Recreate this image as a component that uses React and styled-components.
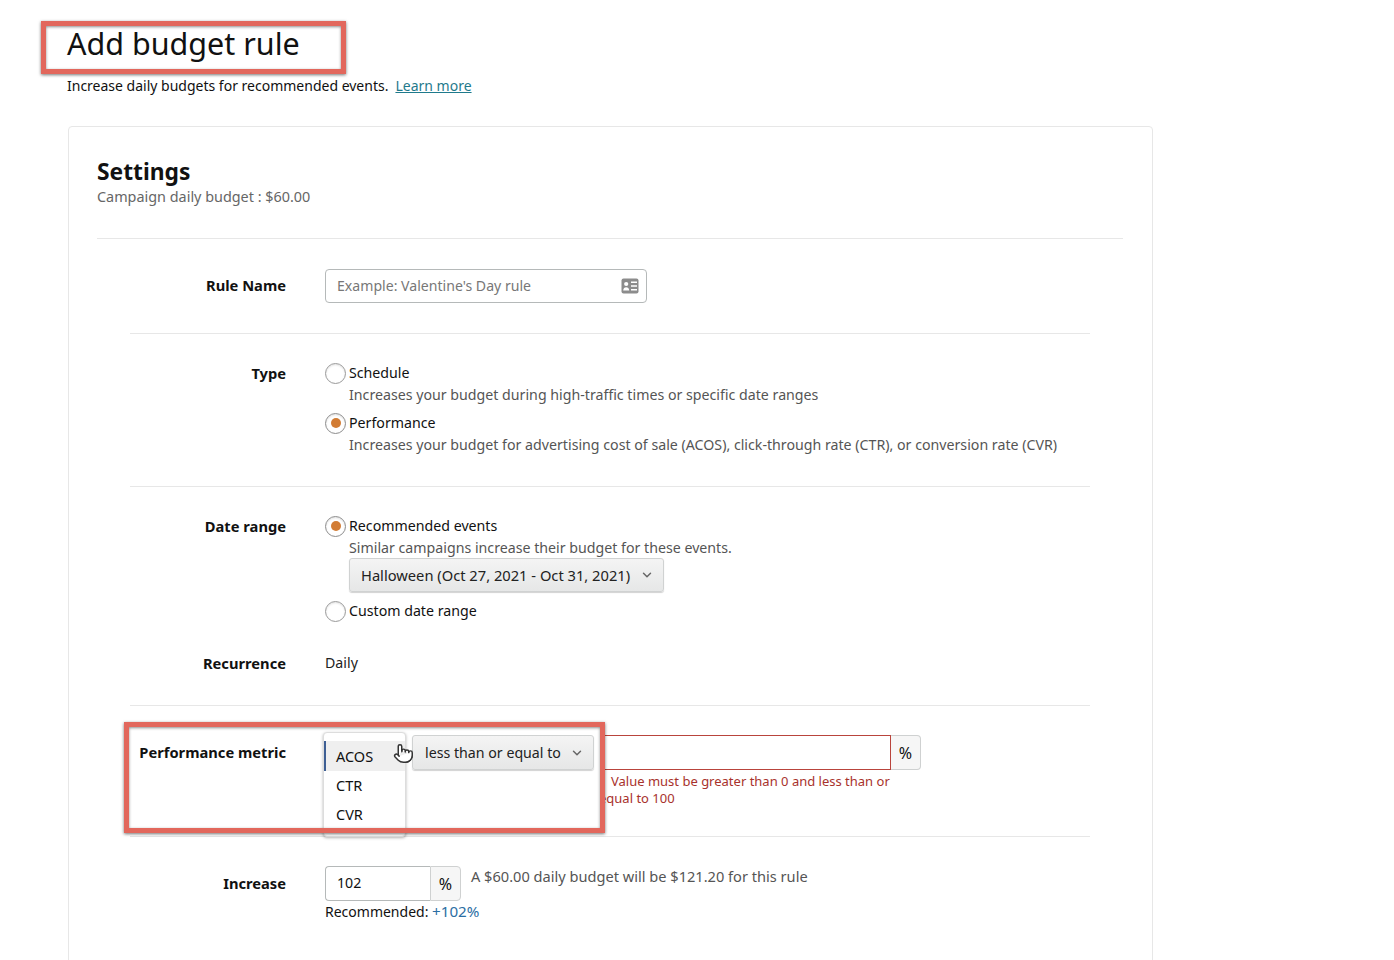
import React from "react";
import styled, { createGlobalStyle } from "styled-components";
import { ChevronDown, Pointer } from "lucide-react";

const GlobalStyle = createGlobalStyle`
body {
  margin: 0;
  background: #fff;
  color: #111;
  font-family: "Noto Sans", "Liberation Sans", sans-serif;
  font-size: 14.2px;
  height: 960px;
  overflow: hidden;
}
`

const Page = styled.div`
  position: relative;
  width: 1394px;
  height: 960px;
  overflow: hidden;
`

const Header = styled.header`
  padding: 23px 0 0 67px;
`

const Title = styled.h1`
  margin: 0;
  font-size: 30.5px;
  font-weight: 400;
  line-height: 40px;
  color: #111;
`

const Intro = styled.p`
  margin: 13px 0 0;
  font-size: 14px;
  line-height: 20px;
`

const LearnMore = styled.a`
  margin-left: 7px;
  color: #1f7a8c;
  text-decoration: underline;
`

const TitleFrame = styled.div`
  position: absolute;
  left: 41px;
  top: 21px;
  width: 305px;
  height: 53px;
  box-sizing: border-box;
  border: 5px solid #e2675c;
  box-shadow: 0 1px 3px rgba(0, 0, 0, 0.55), inset 0 1px 3px rgba(0, 0, 0, 0.45);
`

const Card = styled.section`
  margin: 30px 0 0 68px;
  width: 1085px;
  box-sizing: border-box;
  height: 900px;
  padding: 30px 29px 0 28px;
  border: 1px solid #e7e7e7;
  border-radius: 4px;
`

const CardHead = styled.div`
  padding-bottom: 31px;
  border-bottom: 1px solid #e7e7e7;
`

const CardTitle = styled.h2`
  margin: 0;
  font-size: 22.8px;
  font-weight: 700;
  line-height: 30px;
`

const Subtle = styled.div`
  font-size: 14.4px;
  line-height: 20px;
  color: #666;
`

const Row = styled.div`
  position: relative;
  display: grid;
  grid-template-columns: 156px 1fr;
  column-gap: 39px;
  margin: 0 33px;
  padding: ${(p) => p.$pad || "28px 0 31px"};
  border-bottom: ${(p) => (p.$plain ? "none" : "1px solid #e7e7e7")};
`

const Label = styled.div`
  position: relative;
  z-index: 2;
  text-align: right;
  font-weight: 700;
  font-size: 14.7px;
  line-height: ${(p) => p.$line || "22px"};
`

const Field = styled.div`
  position: relative;
  display: flex;
  align-items: center;
  width: 322px;
  height: 34px;
  box-sizing: border-box;
  border: 1px solid #b5b9b9;
  border-radius: 4px;
  padding: 0 7px 0 11px;
`

const TextInput = styled.input`
  flex: 1;
  min-width: 0;
  border: none;
  outline: none;
  padding: 0 0 2px;
  font: inherit;
  font-size: 14.1px;
  color: #111;
  background: transparent;
  &::placeholder {
    color: #777;
    opacity: 1;
  }
`

const Option = styled.div`
  display: flex;
  align-items: center;
  gap: 3px;
  line-height: 22px;
  margin-top: ${(p) => p.$top || 0}px;
`

const Radio = styled.span`
  display: flex;
  align-items: center;
  justify-content: center;
  width: 21px;
  height: 21px;
  box-sizing: border-box;
  border-radius: 50%;
  border: 1px solid ${(p) => (p.$on ? "#8d8d8d" : "#9a9a9a")};
  box-shadow: inset 0 1px 2px rgba(0, 0, 0, 0.12);
  &::after {
    content: "";
    display: ${(p) => (p.$on ? "block" : "none")};
    width: 10px;
    height: 10px;
    border-radius: 50%;
    background: #d27c34;
  }
`

const Hint = styled.div`
  margin: 1px 0 0 24px;
  line-height: 20px;
  color: #555;
`

const Select = styled.div`
  position: relative;
  z-index: 2;
  display: inline-flex;
  align-items: center;
  justify-content: space-between;
  box-sizing: border-box;
  height: ${(p) => p.$height || 34}px;
  width: ${(p) => p.$width}px;
  margin-left: ${(p) => p.$left || 0}px;
  padding: 0 9px 0 ${(p) => p.$inset || 12}px;
  border: 1px solid #d0d2d2;
  border-radius: 3px;
  background: linear-gradient(#f4f4f4, #e6e7e7);
  box-shadow: 0 1px 1px rgba(0, 0, 0, 0.18);
  color: #222;
  font-size: ${(p) => p.$size || 14.2}px;
`

const Plain = styled.div`
  line-height: 20px;
  color: #222;
`

const MetricControls = styled.div`
  display: flex;
  align-items: flex-start;
`

const MenuSlot = styled.div`
  position: relative;
  z-index: 2;
  width: 87px;
  flex: none;
`

const Menu = styled.ul`
  position: absolute;
  left: -2px;
  top: -3px;
  width: 83px;
  height: 105px;
  box-sizing: border-box;
  margin: 0;
  padding: 8px 0 0;
  list-style: none;
  background: #fff;
  border: 1px solid #ddd;
  border-radius: 4px;
  box-shadow: 0 1px 3px rgba(0, 0, 0, 0.3);
  font-size: 14.5px;
`

const MenuItem = styled.li`
  height: ${(p) => (p.$active ? "30px" : "29px")};
  line-height: ${(p) => (p.$active ? "30px" : "29px")};
  padding-left: ${(p) => (p.$active ? "10px" : "12px")};
  background: ${(p) => (p.$active ? "#efefef" : "transparent")};
  border-left: ${(p) => (p.$active ? "2px solid #3e5f94" : "none")};
`

const ValueColumn = styled.div`
  width: 327px;
  flex: none;
`

const InputGroup = styled.div`
  display: flex;
  height: ${(p) => p.$height}px;
  width: ${(p) => p.$width}px;
  box-sizing: border-box;
`

const ValueBox = styled.div`
  flex: 1;
  display: flex;
  align-items: center;
  padding: 0 11px 2px;
  box-sizing: border-box;
  border: ${(p) => (p.$error ? "1.5px solid #b9443c" : "1px solid #b5b9b9")};
  border-right-width: ${(p) => (p.$error ? "1.5px" : "0")};
  border-radius: ${(p) => (p.$error ? "0" : "4px 0 0 4px")};
`

const Addon = styled.div`
  width: ${(p) => p.$width}px;
  flex: none;
  display: flex;
  align-items: center;
  justify-content: center;
  box-sizing: border-box;
  border: 1px solid #cfd1d1;
  border-left: ${(p) => (p.$joined ? "1px solid #cfd1d1" : "none")};
  border-radius: 0 4px 4px 0;
  background: #f6f6f6;
  font-size: 16px;
`

const ErrorText = styled.div`
  width: 300px;
  box-sizing: border-box;
  padding-left: 5px;
  margin-top: 3px;
  font-size: 13px;
  line-height: 17px;
  text-indent: 12px;
  color: #a8322c;
`

const Mask = styled.div`
  position: absolute;
  left: -6px;
  top: 16px;
  width: 481px;
  height: 111px;
  background: #fff;
  z-index: 1;
`

const Frame = styled.div`
  position: absolute;
  left: -6px;
  top: 16px;
  width: 481px;
  height: 111px;
  box-sizing: border-box;
  border: 5px solid #e2675c;
  box-shadow: 0 1px 3px rgba(0, 0, 0, 0.55), inset 0 1px 3px rgba(0, 0, 0, 0.45);
  z-index: 3;
  pointer-events: none;
`

const Cursor = styled.span`
  position: absolute;
  left: 263px;
  top: 37px;
  z-index: 4;
  display: flex;
  color: #333;
`

const IncreaseLine = styled.div`
  display: flex;
  align-items: flex-start;
  gap: 10px;
`

const Budget = styled.div`
  font-size: 14.6px;
  line-height: 20px;
  color: #555;
`

const Recommended = styled.div`
  font-size: 14px;
  line-height: 20px;
`

const Plus = styled.span`
  color: #2b6ea3;
  font-size: 15.2px;
`

function CardIcon() {
  return (
    <svg width="18" height="16" viewBox="0 0 18 16">
      <rect x="0.5" y="0.5" width="17" height="15" rx="2" fill="#8c8c8c" />
      <circle cx="5.2" cy="6" r="2.1" fill="#fff" />
      <path d="M2.2 12.6c0-2.2 1.4-3.4 3-3.4s3 1.2 3 3.4z" fill="#fff" />
      <path d="M10 4.2h6M10 8h6M10 11.8h6" stroke="#fff" strokeWidth="1.6" />
    </svg>
  )
}

function App() {
  return (
    <Page>
      <GlobalStyle />
      <Header>
        <Title>Add budget rule</Title>
        <Intro>
          Increase daily budgets for recommended events.
          <LearnMore href="#">Learn more</LearnMore>
        </Intro>
      </Header>
      <TitleFrame />

      <Card>
        <CardHead>
          <CardTitle>Settings</CardTitle>
          <Subtle>Campaign daily budget : $60.00</Subtle>
        </CardHead>

        <Row $pad="30px 0 30px">
          <Label $line="33px">Rule Name</Label>
          <Field>
            <TextInput placeholder="Example: Valentine's Day rule" />
            <CardIcon />
          </Field>
        </Row>

        <Row>
          <Label>Type</Label>
          <div>
            <Option><Radio />Schedule</Option>
            <Hint>Increases your budget during high-traffic times or specific date ranges</Hint>
            <Option $top={7}><Radio $on />Performance</Option>
            <Hint>Increases your budget for advertising cost of sale (ACOS), click-through rate (CTR), or conversion rate (CVR)</Hint>
          </div>
        </Row>

        <Row $pad="28px 0 0" $plain>
          <Label>Date range</Label>
          <div>
            <Option><Radio $on />Recommended events</Option>
            <Hint>Similar campaigns increase their budget for these events.</Hint>
            <Select $width={315} $left={24} $size={14.7} $inset={11}>
              Halloween (Oct 27, 2021 - Oct 31, 2021)
              <ChevronDown size={14} strokeWidth={2.5} color="#666" />
            </Select>
            <Option $top={8}><Radio />Custom date range</Option>
          </div>
        </Row>

        <Row $pad="31px 0 31px">
          <Label $line="21px">Recurrence</Label>
          <Plain>Daily</Plain>
        </Row>

        <Row $pad="29px 0 29px">
          <Mask />
          <Label $line="35px">Performance metric</Label>
          <MetricControls>
            <MenuSlot>
              <Menu>
                <MenuItem $active>ACOS</MenuItem>
                <MenuItem>CTR</MenuItem>
                <MenuItem>CVR</MenuItem>
              </Menu>
            </MenuSlot>
            <Select $width={182} $height={35}>
              less than or equal to
              <ChevronDown size={14} strokeWidth={2.5} color="#666" />
            </Select>
            <ValueColumn>
              <InputGroup $height={35} $width={327}>
                <ValueBox $error />
                <Addon $width={30}>%</Addon>
              </InputGroup>
              <ErrorText>Value must be greater than 0 and less than or equal to 100</ErrorText>
            </ValueColumn>
          </MetricControls>
          <Frame />
          <Cursor>
            <Pointer size={21} strokeWidth={1.7} fill="#fff" />
          </Cursor>
        </Row>

        <Row $pad="29px 0 0" $plain>
          <Label $line="35px">Increase</Label>
          <div>
            <IncreaseLine>
              <InputGroup $height={35} $width={136}>
                <ValueBox>102</ValueBox>
                <Addon $width={31} $joined>%</Addon>
              </InputGroup>
              <Budget>A $60.00 daily budget will be $121.20 for this rule</Budget>
            </IncreaseLine>
            <Recommended>Recommended: <Plus>+102%</Plus></Recommended>
          </div>
        </Row>
      </Card>
    </Page>
  )
}

export default App;
